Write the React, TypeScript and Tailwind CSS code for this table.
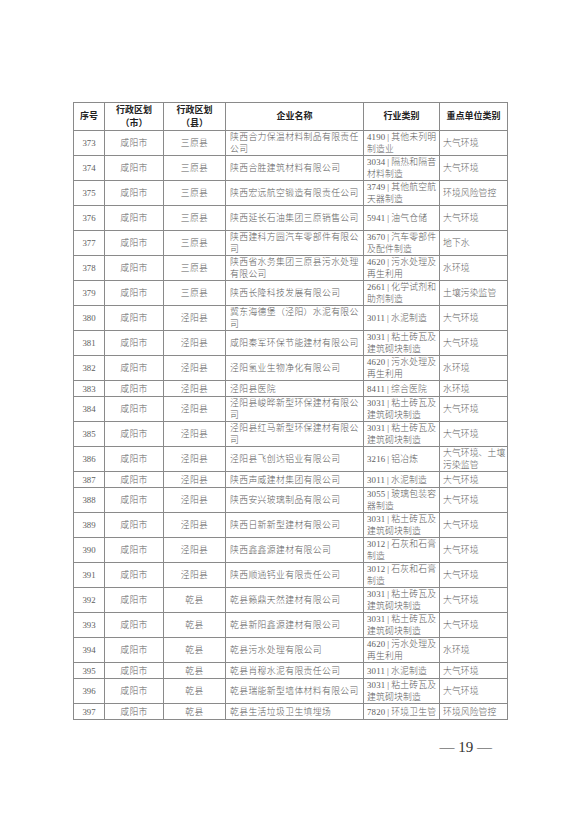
import React from "react";

type Row = [string, string, string, string[], string[], string[], number];

const D = 25;
const S = 16;
const B = "\u2009|\u2009";

const rows: Row[] = [
  ["373", "咸阳市", "三原县", ["陕西合力保温材料制品有限责任", "公司"], ["4190" + B + "其他未列明", "制造业"], ["大气环境"], D],
  ["374", "咸阳市", "三原县", ["陕西合胜建筑材料有限公司"], ["3034" + B + "隔热和隔音", "材料制造"], ["大气环境"], D],
  ["375", "咸阳市", "三原县", ["陕西宏远航空锻造有限责任公司"], ["3749" + B + "其他航空航", "天器制造"], ["环境风险管控"], D],
  ["376", "咸阳市", "三原县", ["陕西延长石油集团三原销售公司"], ["5941" + B + "油气仓储"], ["大气环境"], D],
  ["377", "咸阳市", "三原县", ["陕西建科方圆汽车零部件有限公", "司"], ["3670" + B + "汽车零部件", "及配件制造"], ["地下水"], D],
  ["378", "咸阳市", "三原县", ["陕西省水务集团三原县污水处理", "有限公司"], ["4620" + B + "污水处理及", "再生利用"], ["水环境"], D],
  ["379", "咸阳市", "三原县", ["陕西长隆科技发展有限公司"], ["2661" + B + "化学试剂和", "助剂制造"], ["土壤污染监管"], D],
  ["380", "咸阳市", "泾阳县", ["冀东海德堡（泾阳）水泥有限公", "司"], ["3011" + B + "水泥制造"], ["大气环境"], D],
  ["381", "咸阳市", "泾阳县", ["咸阳秦军环保节能建材有限公司"], ["3031" + B + "粘土砖瓦及", "建筑砌块制造"], ["大气环境"], D],
  ["382", "咸阳市", "泾阳县", ["泾阳氢业生物净化有限公司"], ["4620" + B + "污水处理及", "再生利用"], ["水环境"], D],
  ["383", "咸阳市", "泾阳县", ["泾阳县医院"], ["8411" + B + "综合医院"], ["水环境"], S],
  ["384", "咸阳市", "泾阳县", ["泾阳县峻晔新型环保建材有限公", "司"], ["3031" + B + "粘土砖瓦及", "建筑砌块制造"], ["大气环境"], D],
  ["385", "咸阳市", "泾阳县", ["泾阳县红马新型环保建材有限公", "司"], ["3031" + B + "粘土砖瓦及", "建筑砌块制造"], ["大气环境"], D],
  ["386", "咸阳市", "泾阳县", ["泾阳县飞创达铝业有限公司"], ["3216" + B + "铝冶炼"], ["大气环境、土壤", "污染监管"], D],
  ["387", "咸阳市", "泾阳县", ["陕西声威建材集团有限公司"], ["3011" + B + "水泥制造"], ["大气环境"], S],
  ["388", "咸阳市", "泾阳县", ["陕西安兴玻璃制品有限公司"], ["3055" + B + "玻璃包装容", "器制造"], ["大气环境"], D],
  ["389", "咸阳市", "泾阳县", ["陕西日新新型建材有限公司"], ["3031" + B + "粘土砖瓦及", "建筑砌块制造"], ["大气环境"], D],
  ["390", "咸阳市", "泾阳县", ["陕西鑫鑫源建材有限公司"], ["3012" + B + "石灰和石膏", "制造"], ["大气环境"], D],
  ["391", "咸阳市", "泾阳县", ["陕西顺通钙业有限责任公司"], ["3012" + B + "石灰和石膏", "制造"], ["大气环境"], D],
  ["392", "咸阳市", "乾县", ["乾县籁鼎天然建材有限公司"], ["3031" + B + "粘土砖瓦及", "建筑砌块制造"], ["大气环境"], D],
  ["393", "咸阳市", "乾县", ["乾县新阳鑫源建材有限公司"], ["3031" + B + "粘土砖瓦及", "建筑砌块制造"], ["大气环境"], D],
  ["394", "咸阳市", "乾县", ["乾县污水处理有限公司"], ["4620" + B + "污水处理及", "再生利用"], ["水环境"], D],
  ["395", "咸阳市", "乾县", ["乾县肖穆水泥有限责任公司"], ["3011" + B + "水泥制造"], ["大气环境"], S],
  ["396", "咸阳市", "乾县", ["乾县瑞能新型墙体材料有限公司"], ["3031" + B + "粘土砖瓦及", "建筑砌块制造"], ["大气环境"], D],
  ["397", "咸阳市", "乾县", ["乾县生活垃圾卫生填埋场"], ["7820" + B + "环境卫生管"], ["环境风险管控"], S],
];

function Lines({ lines }: { lines: string[] }) {
  return (
    <>
      {lines.map((l, i) => (
        <div key={i}>{l}</div>
      ))}
    </>
  );
}

export default function App() {
  const body = "border border-[#8a8a8a] align-middle";
  return (
    <div className="w-[578px] h-[818px] bg-white relative overflow-hidden">
      <div className="pt-[102px] pl-[73px]">
        <table
          className="table-fixed border-collapse border-[1.5px] border-[#555] text-[#5e5e5e]"
          style={{ width: 434 }}
        >
          <colgroup>
            <col className="w-[31px]" />
            <col className="w-[59px]" />
            <col className="w-[62px]" />
            <col className="w-[138px]" />
            <col className="w-[76px]" />
            <col className="w-[68px]" />
          </colgroup>
          <thead>
            <tr className="h-[28px] text-[#222] font-bold text-[9px] leading-[12.5px] [font-family:'Noto_Sans_CJK_SC',sans-serif]">
              <th className={body + " text-center p-0"}>序号</th>
              <th className={body + " text-center p-0"}>
                <div>行政区划</div>
                <div>（市）</div>
              </th>
              <th className={body + " text-center p-0"}>
                <div>行政区划</div>
                <div>（县）</div>
              </th>
              <th className={body + " text-center p-0"}>企业名称</th>
              <th className={body + " text-center p-0"}>行业类别</th>
              <th className={body + " text-center p-0"}>重点单位类别</th>
            </tr>
          </thead>
          <tbody className="text-[8.8px] leading-[12px] font-light tracking-[0.4px] [font-family:'Liberation_Serif','Noto_Sans_CJK_SC',serif]">
            {rows.map((r) => (
              <tr key={r[0]} style={{ height: r[6] }}>
                <td className={body + " text-center p-0 tracking-normal"}>{r[0]}</td>
                <td className={body + " text-center p-0"}>{r[1]}</td>
                <td className={body + " text-center p-0"}>{r[2]}</td>
                <td className={body + " text-left px-[4px] py-0 whitespace-nowrap"}>
                  <Lines lines={r[3]} />
                </td>
                <td className={body + " text-left px-[3px] py-0 whitespace-nowrap tracking-[0.2px]"}>
                  <Lines lines={r[4]} />
                </td>
                <td className={body + " text-left px-[3px] py-0 whitespace-nowrap tracking-[0.1px]"}>
                  <Lines lines={r[5]} />
                </td>
              </tr>
            ))}
          </tbody>
        </table>
      </div>
      <div className="flex justify-end pr-[86px] mt-[16px] text-[15px] text-[#333] [font-family:'Liberation_Serif',serif]">
        <span>—&nbsp;19&nbsp;—</span>
      </div>
    </div>
  );
}
